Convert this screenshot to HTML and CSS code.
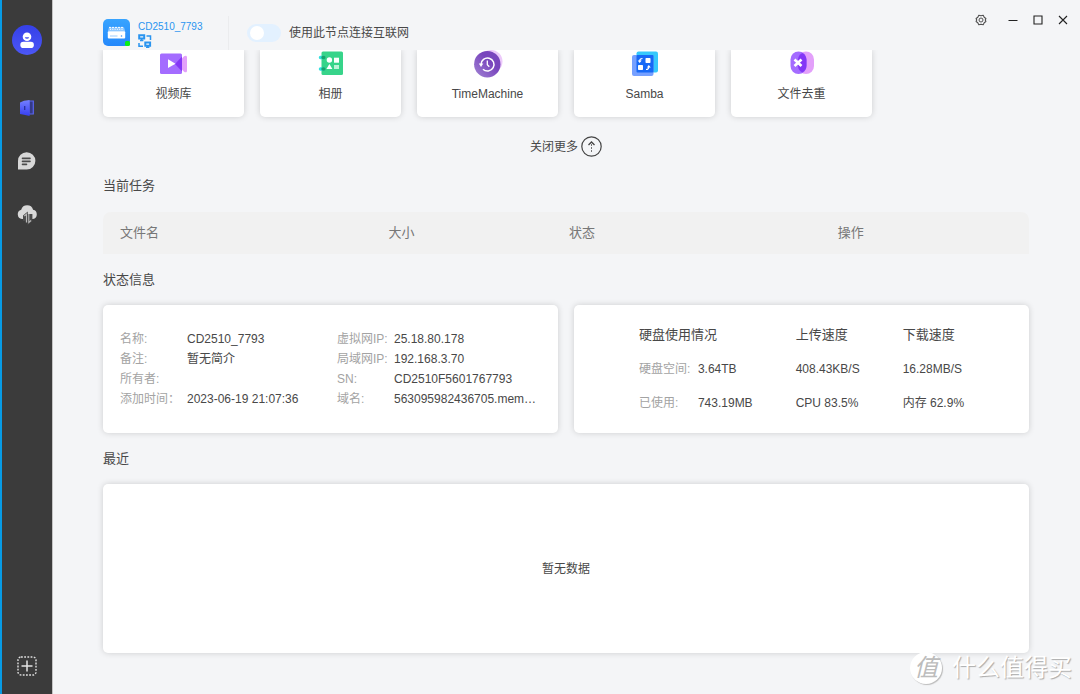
FILE: index.html
```html
<!DOCTYPE html>
<html lang="zh-CN">
<head>
<meta charset="utf-8">
<meta name="viewport" content="width=device-width, initial-scale=1">
<title>CD2510_7793</title>
<link rel="stylesheet" href="styles.css">
</head>
<body>
<div class="app">
  <nav class="sidebar">
    <button class="side-btn avatar" aria-label="账户">
      <svg width="30" height="30" viewBox="0 0 30 30">
        <defs><linearGradient id="av" x1="0" y1="0" x2="0" y2="1"><stop offset="0" stop-color="#3540e8"/><stop offset="1" stop-color="#4c57f6"/></linearGradient></defs>
        <circle cx="15" cy="15" r="15" fill="url(#av)"/>
        <circle cx="15" cy="11.8" r="4.3" fill="#fff"/>
        <path d="M12.8 12.2a2.3 2.3 0 0 0 4.4 0z" fill="#4650ee"/>
        <rect x="8.3" y="16.8" width="13.6" height="6.2" rx="3.1" fill="#fff"/>
      </svg>
    </button>
    <button class="side-btn" aria-label="设备">
      <svg width="24" height="24" viewBox="0 0 24 24">
        <defs><linearGradient id="dv" x1="0" y1="0" x2="0" y2="1"><stop offset="0" stop-color="#7480ff"/><stop offset="1" stop-color="#363ef0"/></linearGradient></defs>
        <path d="M14 5h4.3v13H14z" fill="#343a86" stroke="#5964ee" stroke-width="1.2"/>
        <path d="M5 6.500 9 4.700 14.600 4v16L9 18.700l-4-.7z" fill="url(#dv)"/>
        <path d="M9.700 10v4" stroke="#28309c" stroke-width="1.300"/>
      </svg>
    </button>
    <button class="side-btn" aria-label="消息">
      <svg width="24" height="24" viewBox="0 0 24 24">
        <path d="M3 20.600V12a8.700 8.700 0 1 1 8.700 8.600z" fill="#d8d8d8"/>
        <path d="M7.500 9.400h7.500M7.500 12.400h7.500M7.500 15.400h4" stroke="#4c4c4c" stroke-width="1.600" stroke-linecap="round"/>
      </svg>
    </button>
    <button class="side-btn" aria-label="云传输">
      <svg width="24" height="24" viewBox="0 0 24 24">
        <path d="M7 17a4.700 4.700 0 0 1-.8-9.200 6.200 6.200 0 0 1 11.900 0A4.700 4.700 0 0 1 18 17z" fill="#d8d8d8"/>
        <path d="M11.500 20.500v-8.300L9.300 14v5M13.800 12v8.500l2.300-2V12" fill="none" stroke="#4a4a4a" stroke-width="2.600"/>
        <path d="M11.500 20.500v-8.300L9.300 14M13.800 12v8.500l2.300-2" fill="none" stroke="#b8b8b8" stroke-width="1.100"/>
      </svg>
    </button>
    <button class="side-btn side-add" aria-label="添加">
      <svg width="24" height="24" viewBox="0 0 24 24">
        <rect x="3" y="3" width="18" height="18" rx="3" fill="none" stroke="#e0e0e0" stroke-width="1.400" stroke-dasharray="1.800 1.400"/>
        <path d="M12 6.500v11M6.500 12h11" stroke="#e4e4e4" stroke-width="1.500"/>
      </svg>
    </button>
  </nav>

  <main class="main">
    <header class="topbar">
      <svg class="device-icon" width="27" height="27" viewBox="0 0 27 27">
        <defs><linearGradient id="dev" x1="0" y1="0" x2="0" y2="1"><stop offset="0" stop-color="#38a4ff"/><stop offset="1" stop-color="#2488fb"/></linearGradient></defs>
        <rect width="27" height="27" rx="5" fill="url(#dev)"/>
        <path d="M6 8.200h15l1.200 4.300H4.800z" fill="#8fc8ff"/>
        <path d="M6 8.400h15" stroke="#fff" stroke-width="1" stroke-dasharray="2 1"/>
        <path d="M7 10.300h13" stroke="#fff" stroke-width="1" stroke-dasharray="1 1.300"/>
        <rect x="4.800" y="12.200" width="17.400" height="7.400" rx="1" fill="#fff"/>
        <path d="M7 17h7.500" stroke="#9acbff" stroke-width="1"/><circle cx="18.500" cy="17" r=".8" fill="#398ff0"/>
        <rect x="22" y="22" width="5" height="5" rx="1.500" fill="#08ef16"/>
      </svg>
      <div class="device">
        <span class="device-name">CD2510_7793</span>
        <svg width="14" height="14" viewBox="0 0 14 14" fill="none" stroke="#2a94ef">
          <path d="M1.200 1.300h5v3.200h-5zM7.300 8.500h4.800v3.200H7.300z" stroke-width="2"/>
          <path d="M3.700 4.500v2M2 6.400h3.400M9.700 11.500v2M8 13.300h3.400M8.500 2h4v4M1 9v3.200h4" stroke-width="1.500"/>
        </svg>
      </div>
      <label class="node-toggle">
        <input class="switch" type="checkbox" role="switch">
        <span>使用此节点连接互联网</span>
      </label>
      <div class="window-controls">
        <button class="win-btn win-settings" aria-label="设置">
          <svg width="12" height="12" viewBox="0 0 12 12" fill="none" stroke="#505050">
            <path d="M3.800 1.300 6 1.800l2.200-.5 1 2 1.700 1.200-.6 1.500.6 1.500-1.700 1.200-1 2L6 10.200l-2.200.5-1-2L1.100 7.500 1.700 6l-.6-1.500 1.700-1.200z" stroke-width="1.100" stroke-linejoin="round"/>
            <circle cx="6" cy="6" r="2"/>
          </svg>
        </button>
        <button class="win-btn" aria-label="最小化"><svg width="10" height="10" viewBox="0 0 10 10"><path d="M.5 5.500h9" stroke="#222"/></svg></button>
        <button class="win-btn" aria-label="最大化"><svg width="10" height="10" viewBox="0 0 10 10"><path d="M1 1h8v8H1z" fill="none" stroke="#222" stroke-width="1.100"/></svg></button>
        <button class="win-btn" aria-label="关闭"><svg width="10" height="10" viewBox="0 0 10 10"><path d="m1 1 8 8M9 1 1 9" stroke="#222" stroke-width="1.100"/></svg></button>
      </div>
    </header>

    <div class="content">
      <div class="apps">
        <button class="card app-card">
          <svg width="30" height="28" viewBox="0 0 30 28">
            <path d="m18 14 7-7.800c1.600-1 3-.6 3 1v13.600c0 1.600-1.400 2-3 1z" fill="#e3a0fa"/>
            <rect x="1" y="3.500" width="22" height="20.500" rx="1.500" fill="#a46cff"/>
            <path d="m16 14 7-7.500v15z" fill="#8436f6"/>
            <path d="M9 9.300v8.800l7.500-4.400z" fill="#fff"/>
          </svg>
          <span>视频库</span>
        </button>
        <button class="card app-card">
          <svg width="30" height="28" viewBox="0 0 30 28">
            <rect x="5.500" y="1.500" width="21.500" height="23.500" rx="1.500" fill="#37d48a"/>
            <path d="M4.500 7.500h3M4.500 19h3" stroke="#33e0df" stroke-width="3.500" stroke-linecap="round"/>
            <path d="M7 7.500h.8M7 19h.8" stroke="#18a46c" stroke-width="3.500" stroke-linecap="round"/>
            <circle cx="13.400" cy="10" r="2.700" fill="#fff"/><rect x="18" y="7.700" width="5" height="5" fill="#fff"/>
            <path d="m13.400 14 3 5h-6z" fill="#fff"/><rect x="18" y="15" width="5" height="4" fill="#bdf3d8"/>
          </svg>
          <span>相册</span>
        </button>
        <button class="card app-card">
          <svg width="30" height="28" viewBox="0 0 30 28">
            <defs><linearGradient id="tm" x1="1" y1="0" x2="0" y2="1"><stop offset=".4" stop-color="#7945bd"/><stop offset="1" stop-color="#a285d4"/></linearGradient></defs>
            <circle cx="18" cy="11.500" r="11.500" fill="#ecc9fa"/>
            <circle cx="14.300" cy="14.200" r="13.200" fill="url(#tm)"/>
            <path d="M8 14.500a6.500 6.500 0 1 1 2 4.700" fill="none" stroke="#fff" stroke-width="1.500"/>
            <path d="M5.800 13.500h4.500L8 17z" fill="#fff"/>
            <path d="M14.300 10.500v4.200l2 2" fill="none" stroke="#fff" stroke-width="1.300"/>
          </svg>
          <span>TimeMachine</span>
        </button>
        <button class="card app-card">
          <svg width="30" height="28" viewBox="0 0 30 28">
            <rect x="6.500" y="1.500" width="21.500" height="21" rx="2" fill="#36c8fc"/>
            <rect x="2" y="5" width="21.500" height="21" rx="2" fill="#76a0ff"/>
            <rect x="6.500" y="5" width="17" height="17.500" rx="1" fill="#1769f6"/>
            <rect x="15.500" y="8" width="5" height="5" rx=".7" fill="#fff"/><rect x="8" y="15" width="5" height="5" rx=".7" fill="#fff"/>
            <path d="M12.500 8.500c-2 0-2.800 1-2.800 2.500M16 19.500c2 0 2.800-1 2.800-2.500" fill="none" stroke="#fff" stroke-width="1.200"/>
            <path d="M7.700 10.500h4l-2 2.500zM16.800 17.500h4l-2-2.500z" fill="#fff"/>
          </svg>
          <span>Samba</span>
        </button>
        <button class="card app-card">
          <svg width="30" height="28" viewBox="0 0 30 28">
            <rect x="11" y="1.500" width="16" height="22.500" rx="8" fill="#e3a0fa"/>
            <rect x="3.500" y="1.500" width="16" height="22.500" rx="8" fill="#a46cff"/>
            <path d="M15.300 3a8 8 0 0 1 4.200 7v5.500a8 8 0 0 1-4.200 7 8 8 0 0 1-4.300-7V10a8 8 0 0 1 4.300-7" fill="#8436f6"/>
            <path d="m7.500 9.500 7 6.500m0-6.500-7 6.500" stroke="#fff" stroke-width="2.600"/>
          </svg>
          <span>文件去重</span>
        </button>
      </div>

      <button class="more">
        <span>关闭更多</span>
        <svg width="21" height="21" viewBox="0 0 21 21" fill="none" stroke="#444">
          <circle cx="10.500" cy="10.500" r="9.700" stroke-width="1.200"/>
          <path d="m7.500 9 3-3 3 3" stroke-width="1.300"/><path d="M10.500 8v8" stroke="#777" stroke-dasharray="2 1"/>
        </svg>
      </button>

      <h2 class="section-title">当前任务</h2>
      <table class="tasks">
        <thead><tr><th class="col-file">文件名</th><th class="col-size">大小</th><th class="col-state">状态</th><th>操作</th></tr></thead>
      </table>

      <h2 class="section-title">状态信息</h2>
      <div class="status">
        <section class="card info">
          <dl class="facts">
            <dt>名称:</dt><dd>CD2510_7793</dd>
            <dt>备注:</dt><dd>暂无简介</dd>
            <dt>所有者:</dt><dd></dd>
            <dt>添加时间：</dt><dd>2023-06-19 21:07:36</dd>
          </dl>
          <dl class="facts facts-net">
            <dt>虚拟网IP:</dt><dd>25.18.80.178</dd>
            <dt>局域网IP:</dt><dd>192.168.3.70</dd>
            <dt>SN:</dt><dd>CD2510F5601767793</dd>
            <dt>域名:</dt><dd>563095982436705.mem…</dd>
          </dl>
        </section>
        <section class="card usage">
          <div class="usage-col">
            <h3>硬盘使用情况</h3>
            <p><span class="usage-label">硬盘空间:</span>3.64TB</p>
            <p><span class="usage-label">已使用:</span>743.19MB</p>
          </div>
          <div class="usage-col">
            <h3>上传速度</h3>
            <p>408.43KB/S</p>
            <p>CPU 83.5%</p>
          </div>
          <div class="usage-col">
            <h3>下载速度</h3>
            <p>16.28MB/S</p>
            <p>内存 62.9%</p>
          </div>
        </section>
      </div>

      <h2 class="section-title">最近</h2>
      <section class="card recent">暂无数据</section>
    </div>
  </main>
  <div class="watermark"><span class="watermark-badge">值</span><span>什么值得买</span></div>
</div>
</body>
</html>
```
FILE: styles.css
```css
* { box-sizing: border-box; }

body {
  margin: 0;
  background: #f4f5f7;
  color: #484848;
  font: 12px/20px "Liberation Sans", "Noto Sans CJK SC", sans-serif;
}

button {
  padding: 0;
  border: 0;
  background: none;
  color: inherit;
  font: inherit;
  cursor: pointer;
}

svg { display: block; flex: none; }
h2, h3, p, dl, dd { margin: 0; font-weight: 400; }

.app {
  position: relative;
  display: flex;
  min-height: 100vh;
}

/* Sidebar */
.sidebar {
  display: flex;
  flex: none;
  flex-direction: column;
  align-items: center;
  gap: 29px;
  width: 53px;
  padding: 25px 0 16px;
  border-left: 2px solid #079be5;
  border-right: 1px solid #c4c4c4;
  background: #3b3b3b;
}
.avatar { margin-bottom: 12px; }
.side-add { margin-top: auto; }

.main {
  display: flex;
  flex: 1;
  flex-direction: column;
  min-width: 0;
}

/* Top bar */
.topbar {
  display: flex;
  align-items: flex-end;
  height: 50px;
  padding: 0 12px 0 50px;
}
.device-icon { margin: 0 8px 4px 0; }
.device {
  display: flex;
  flex-direction: column;
  align-self: stretch;
  width: 91px;
  margin-top: 16px;
  padding: 4px 0;
  border-right: 1px solid #ebecee;
  color: #2994f0;
  font-size: 10px;
  line-height: 14px;
}
.node-toggle {
  display: flex;
  align-items: center;
  gap: 8px;
  margin: 0 0 7px 18px;
}
.switch {
  width: 34px;
  height: 18px;
  margin: 0;
  padding: 2px 3px;
  border-radius: 9px;
  background: #e3f1ff;
  appearance: none;
}
.switch::before {
  display: block;
  width: 14px;
  height: 14px;
  border-radius: 50%;
  background: #fff;
  content: "";
}
.switch:checked { background: #2994f0; }
.switch:checked::before { margin-left: auto; }
.window-controls {
  display: flex;
  align-self: flex-start;
  align-items: center;
  gap: 15px;
  margin: 14px 0 0 auto;
}
.win-settings { margin-right: 6px; }

/* Content */
.content {
  flex: 1;
  padding: 0 51px 41px 50px;
  overflow: hidden;
}
.card {
  border-radius: 5px;
  background: #fff;
  box-shadow: 0 0 6px rgba(0, 0, 0, 0.16);
}
.apps {
  display: grid;
  grid-template-columns: repeat(6, 1fr);
  gap: 16px;
}
.app-card {
  display: flex;
  flex-direction: column;
  align-items: center;
  gap: 6px;
  height: 67px;
  border-radius: 0 0 5px 5px;
}
.more {
  display: flex;
  align-items: center;
  gap: 3px;
  margin: 19px auto;
}
.section-title {
  font-size: 13px;
  line-height: 20px;
}

.tasks {
  width: 100%;
  margin: 16px 0;
  border-collapse: collapse;
  border-radius: 8px 8px 0 0;
  background: #f1f1f1;
  color: #777;
  font-size: 13px;
  table-layout: fixed;
}
.tasks th {
  height: 42px;
  padding: 0 17px;
  font-weight: 400;
  text-align: left;
}
.col-file, .col-state { width: 29%; }
.col-size { width: 19.5%; }

.status {
  display: grid;
  grid-template-columns: 1fr 1fr;
  gap: 16px;
  margin: 15px 0 16px;
}
.info {
  display: flex;
  gap: 16px;
  padding: 24px 17px 23px;
}
.facts {
  display: grid;
  grid-template-columns: 67px auto;
  grid-auto-rows: 20px;
  width: 201px;
  white-space: nowrap;
}
.facts-net {
  flex: 1;
  grid-template-columns: 57px auto;
}
.facts dt, .usage-label { color: #a3a3a3; }
.usage {
  display: flex;
  justify-content: center;
  gap: 43px;
  padding: 20px 16px;
}
.usage-col {
  display: grid;
  align-content: start;
  gap: 14px;
  white-space: nowrap;
}
.usage h3 { font-size: 13px; }
.usage-label {
  display: inline-block;
  width: 59px;
}
.recent {
  display: grid;
  place-items: center;
  min-height: 169px;
  margin-top: 15px;
}

/* Overlay */
.watermark {
  position: absolute;
  right: 8px;
  bottom: 8px;
  display: flex;
  align-items: center;
  gap: 10px;
  color: #fff;
  font-size: 24px;
  line-height: 36px;
  text-shadow: 1px 1px 1px #aaa;
  pointer-events: none;
}
.watermark-badge {
  width: 32px;
  height: 32px;
  border-radius: 50%;
  background: #fff;
  box-shadow: 1px 1px 1px #bbb;
  color: #bcbcbc;
  font-style: italic;
  line-height: 32px;
  text-align: center;
  text-shadow: none;
}
```
